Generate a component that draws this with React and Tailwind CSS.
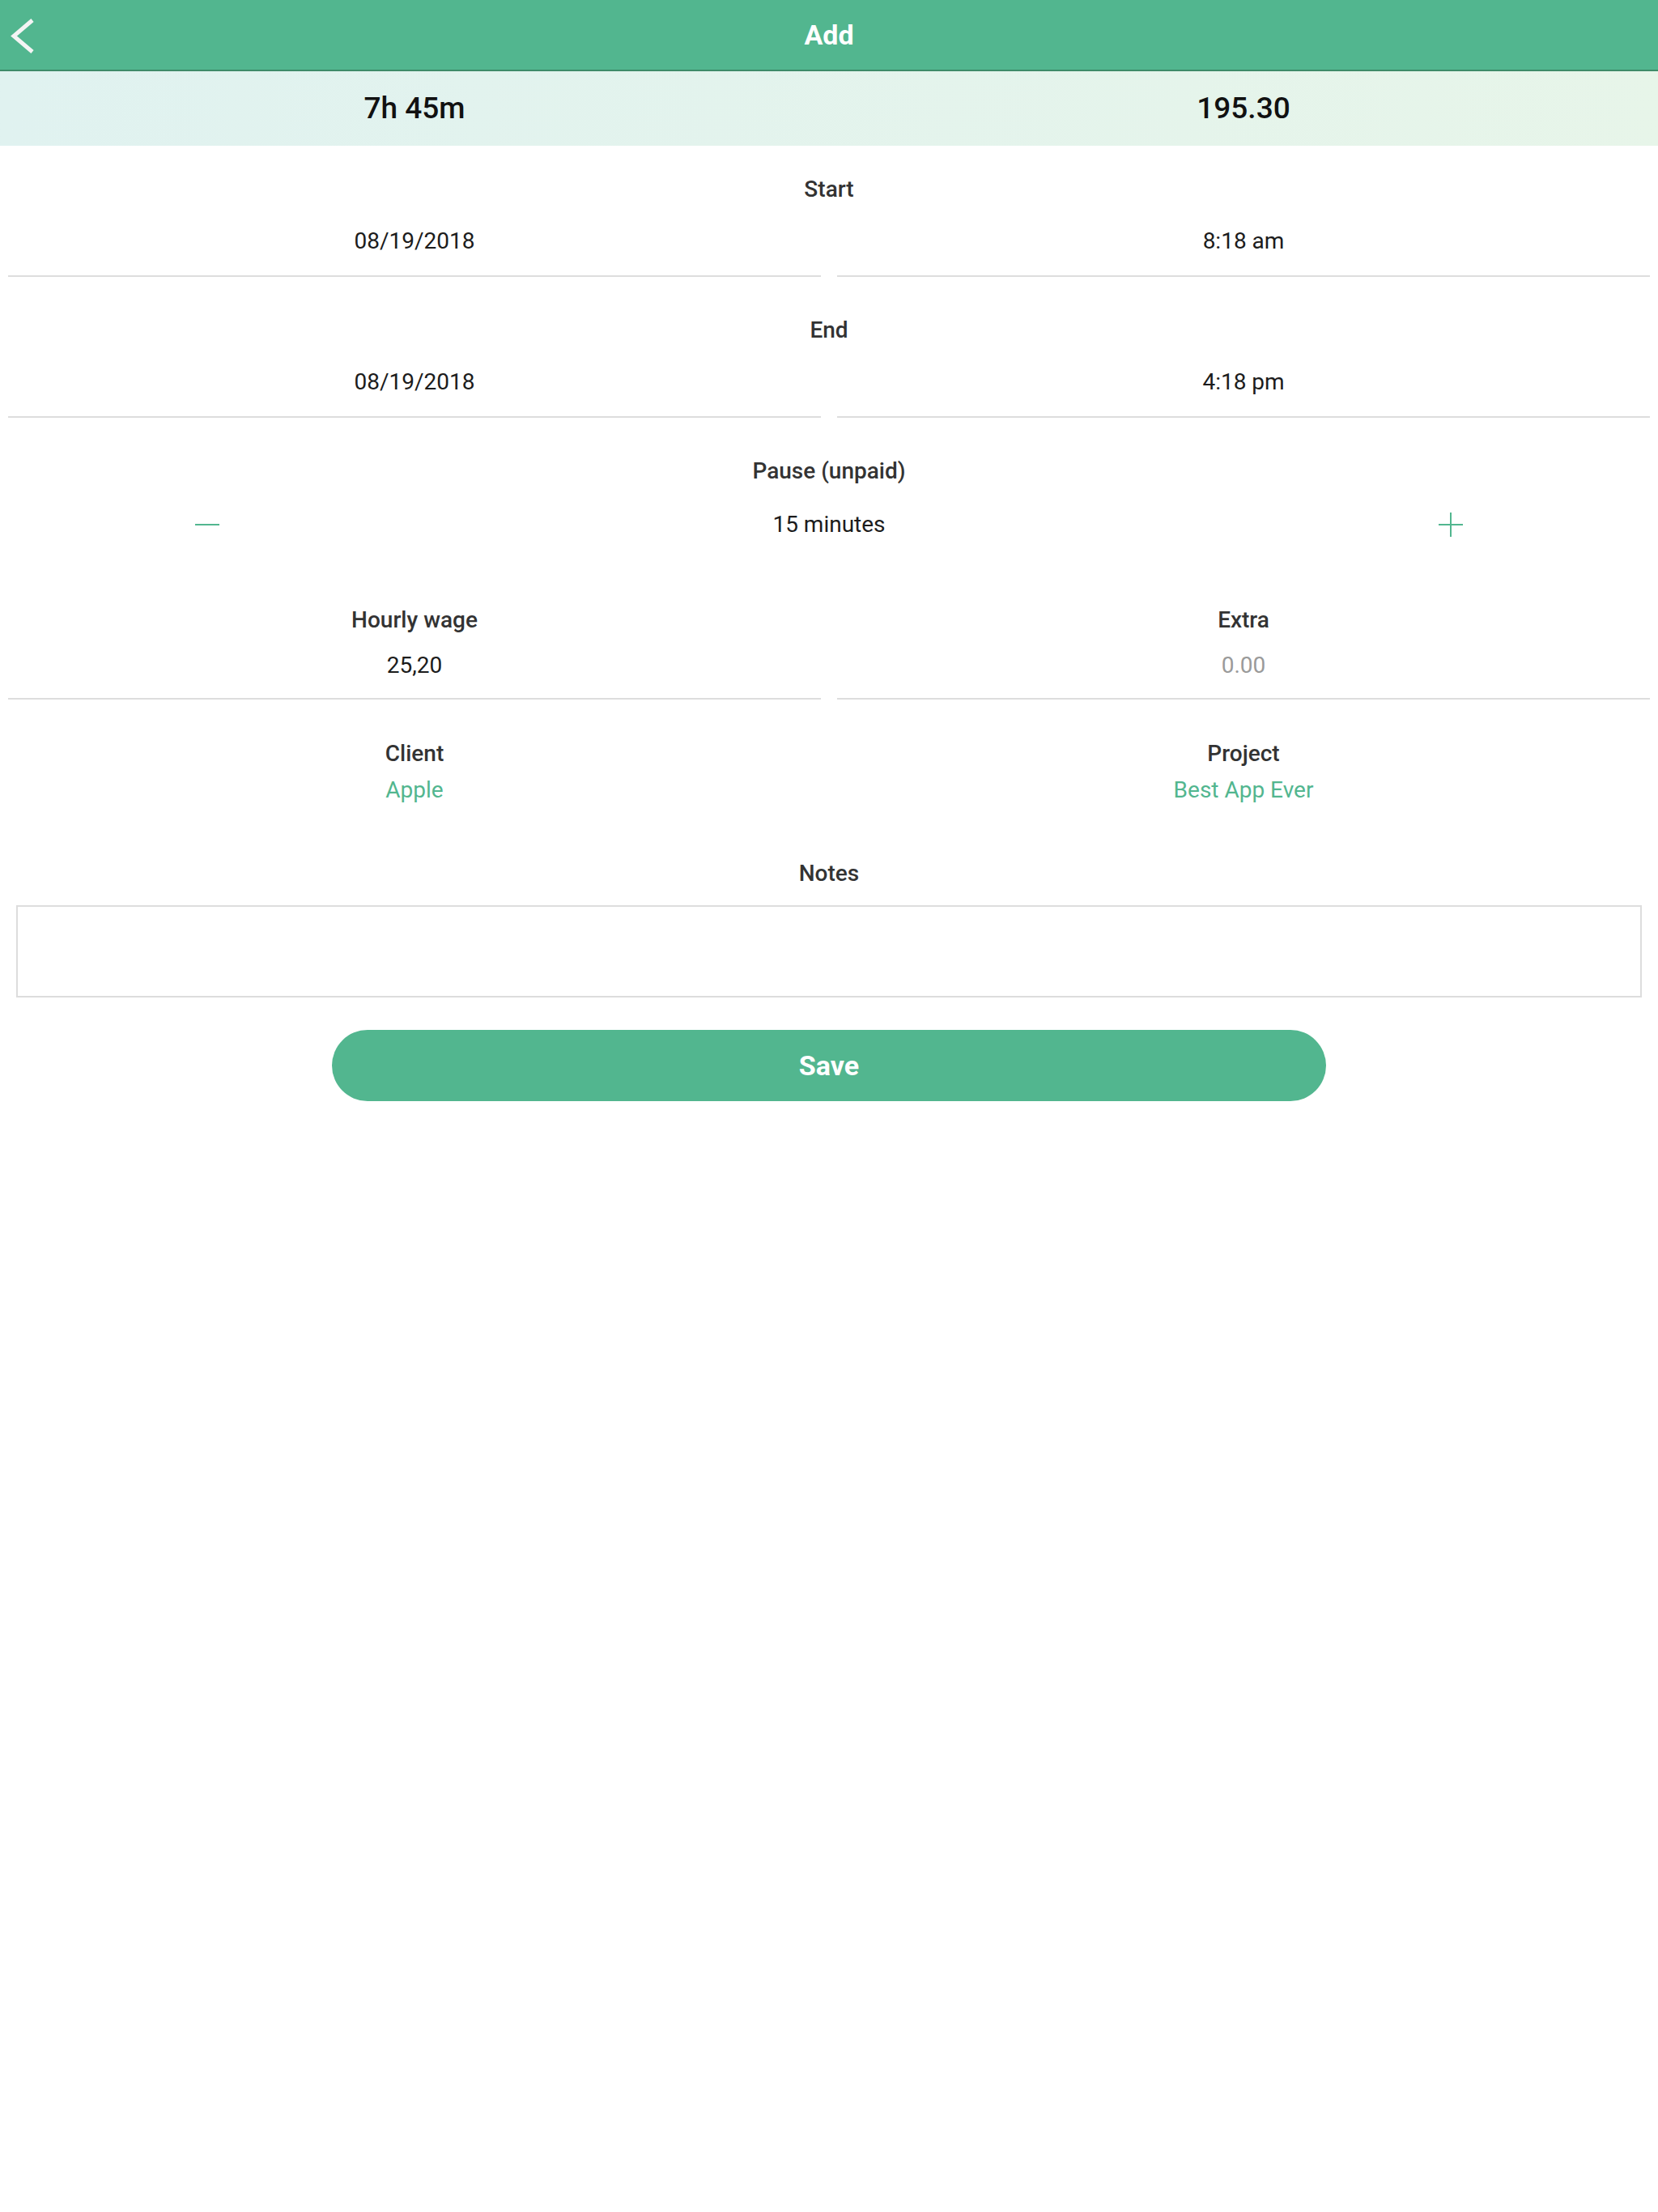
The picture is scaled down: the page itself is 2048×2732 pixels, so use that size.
import React from 'react';

const font = { fontFamily: 'Roboto, "Noto Sans", sans-serif' };

function Label({ children }) {
  return <div className="text-center text-[28px] leading-[34px] font-medium text-[#333]">{children}</div>;
}

function Field({ children, muted }) {
  return (
    <div className="px-[10px]">
      <div
        className={`border-b-2 border-[#dddddd] pb-[25px] text-center text-[28px] leading-[34px] ${
          muted ? 'text-[#9a9a9a]' : 'text-[#1c1c1c]'
        }`}
      >
        {children}
      </div>
    </div>
  );
}

function Minus() {
  return (
    <svg width="30" height="30" viewBox="0 0 30 30">
      <line x1="0" y1="15" x2="30" y2="15" stroke="#52b68f" strokeWidth="2" />
    </svg>
  );
}

function Plus() {
  return (
    <svg width="30" height="30" viewBox="0 0 30 30">
      <line x1="0" y1="15" x2="30" y2="15" stroke="#52b68f" strokeWidth="2" />
      <line x1="15" y1="0" x2="15" y2="30" stroke="#52b68f" strokeWidth="2" />
    </svg>
  );
}

export default function App() {
  return (
    <div style={font} className="min-h-screen bg-white">
      {/* top bar */}
      <div className="relative h-[88px] bg-[#52b68f] border-b-2 border-[#3e8b69] flex items-center justify-center">
        <button className="absolute left-0 top-0 w-[60px] h-[86px]">
          <svg width="60" height="86" viewBox="0 0 60 86">
            <polyline points="40,25 17,44.5 40,64" fill="none" stroke="#f4f4f4" strokeWidth="5" />
          </svg>
        </button>
        <h1 className="text-white text-[34px] font-bold leading-none">Add</h1>
      </div>

      {/* totals */}
      <div className="grid grid-cols-2 h-[92px] items-center bg-gradient-to-r from-[#e0f2f0] to-[#e7f5e9]">
        <div className="text-center text-[37px] font-medium text-[#111]">7h 45m</div>
        <div className="text-center text-[37px] font-medium text-[#111]">195.30</div>
      </div>

      {/* start */}
      <div className="pt-[37px]">
        <Label>Start</Label>
        <div className="grid grid-cols-2 mt-[30px]">
          <Field>08/19/2018</Field>
          <Field>8:18 am</Field>
        </div>
      </div>

      {/* end */}
      <div className="pt-[49px]">
        <Label>End</Label>
        <div className="grid grid-cols-2 mt-[30px]">
          <Field>08/19/2018</Field>
          <Field>4:18 pm</Field>
        </div>
      </div>

      {/* pause */}
      <div className="pt-[49px]">
        <Label>Pause (unpaid)</Label>
        <div className="grid grid-cols-4 items-center mt-[32px] h-[34px]">
          <div className="flex justify-center"><Minus /></div>
          <div className="col-span-2 text-center text-[28px] leading-[34px] text-[#1c1c1c]">15 minutes</div>
          <div className="flex justify-center"><Plus /></div>
        </div>
      </div>

      {/* wage / extra */}
      <div className="grid grid-cols-2 pt-[84px]">
        <div>
          <Label>Hourly wage</Label>
          <div className="mt-[22px] px-[10px]">
            <div className="border-b-2 border-[#dddddd] pb-[23px] text-center text-[28px] leading-[34px] text-[#1c1c1c]">25,20</div>
          </div>
        </div>
        <div>
          <Label>Extra</Label>
          <div className="mt-[22px] px-[10px]">
            <div className="border-b-2 border-[#dddddd] pb-[23px] text-center text-[28px] leading-[34px] text-[#9a9a9a]">0.00</div>
          </div>
        </div>
      </div>

      {/* client / project */}
      <div className="grid grid-cols-2 pt-[50px]">
        <div>
          <Label>Client</Label>
          <div className="mt-[11px] text-center text-[28px] leading-[34px] text-[#52b68f]">Apple</div>
        </div>
        <div>
          <Label>Project</Label>
          <div className="mt-[11px] text-center text-[28px] leading-[34px] text-[#52b68f]">Best App Ever</div>
        </div>
      </div>

      {/* notes */}
      <div className="pt-[69px] px-[20px]">
        <Label>Notes</Label>
        <textarea className="mt-[22px] block w-full h-[114px] border-2 border-[#dddddd] outline-none resize-none text-[28px] p-3" />
      </div>

      <div className="flex justify-center pt-[40px]">
        <button className="w-[60%] h-[88px] rounded-full bg-[#52b68f] text-white text-[34px] font-bold">Save</button>
      </div>
    </div>
  );
}
